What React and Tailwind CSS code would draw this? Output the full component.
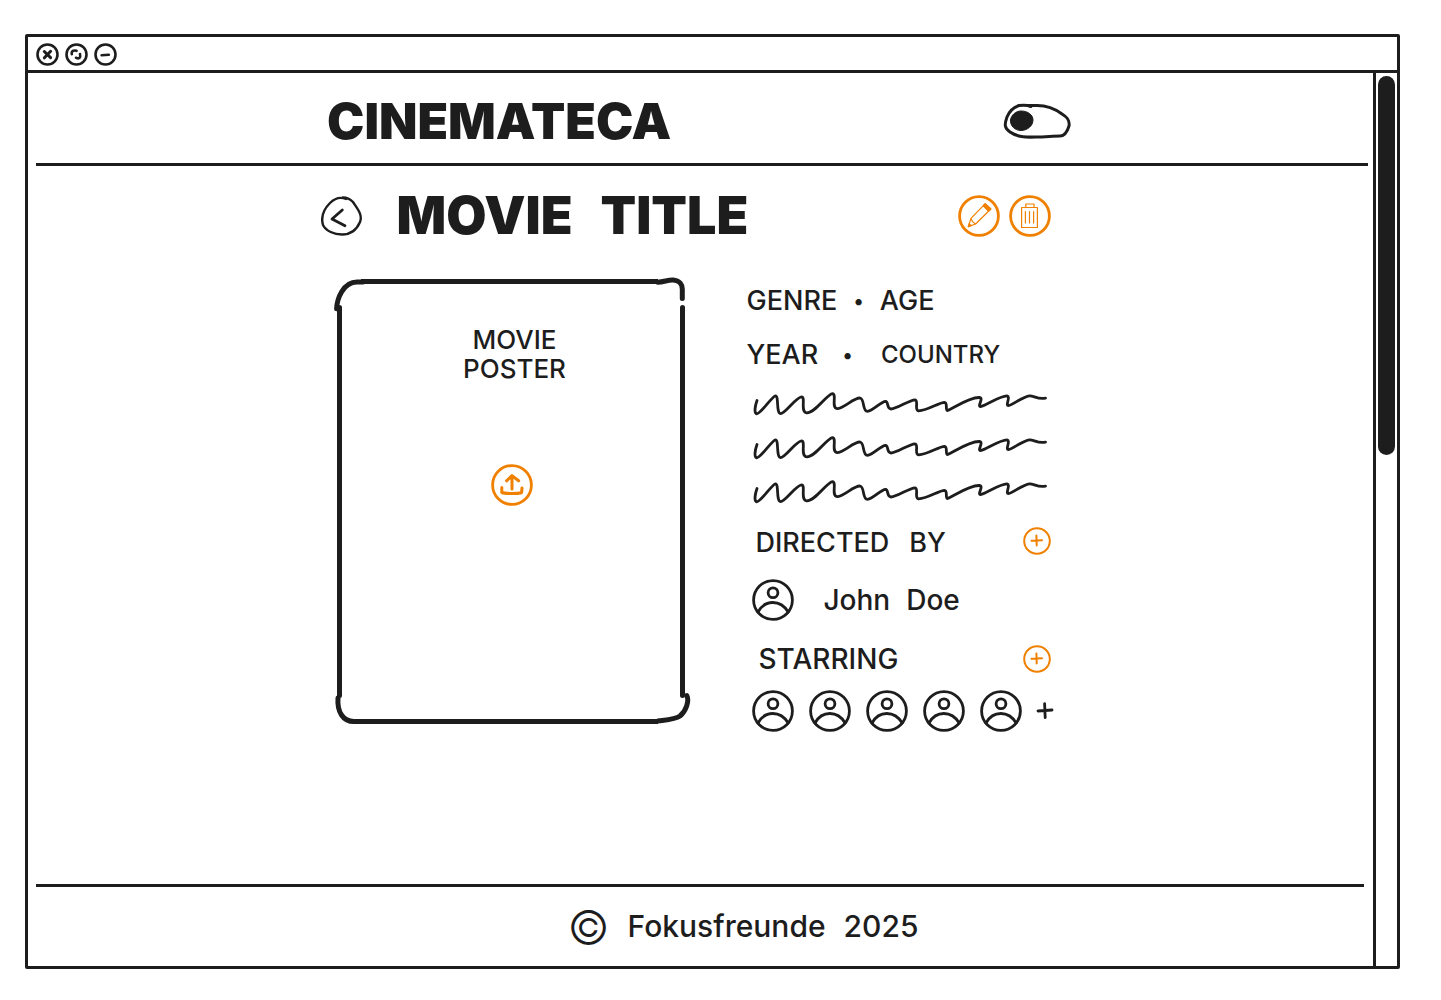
const stroke = {
  fill: 'none',
  stroke: 'currentColor',
  strokeLinecap: 'round',
  strokeLinejoin: 'round',
};

function WindowButton({ label, children }) {
  return (
    <button type="button" aria-label={label} className="size-[23px]">
      <svg viewBox="0 0 23 23" className="size-full" {...stroke} strokeWidth="2.6">
        <circle cx="11.5" cy="11.5" r="10" />
        {children}
      </svg>
    </button>
  );
}

function RoundButton({ label, children }) {
  return (
    <button type="button" aria-label={label} className="size-[42px] text-[#f08000]">
      <svg viewBox="0 0 42 42" className="size-full" {...stroke} strokeWidth="2.8">
        <circle cx="21" cy="21" r="19.4" />
        {children}
      </svg>
    </button>
  );
}

function AddButton({ label }) {
  return (
    <button type="button" aria-label={label} className="size-7 text-[#f08000]">
      <svg viewBox="0 0 28 28" className="size-full" {...stroke} strokeWidth="2">
        <circle cx="14" cy="14" r="12.8" />
        <path d="M8.5 13.7 L19 13.2 M13.4 8.6 L13.7 18.4" />
      </svg>
    </button>
  );
}

function Avatar() {
  return (
    <svg viewBox="0 0 42 42" className="size-[42px] shrink-0" aria-hidden="true" {...stroke} strokeWidth="2.8">
      <circle cx="21" cy="21" r="19.4" />
      <circle cx="21" cy="13.8" r="4.9" />
      <path d="M6 33 C13 20.3 28.5 20.3 36.2 33" />
    </svg>
  );
}

function Squiggle() {
  return (
    <svg viewBox="0 0 295 24" className="h-6 w-[295px]" aria-hidden="true" {...stroke} strokeWidth="2.8">
      <path d="M4 8.5 C2 14 1 21 3.6 21.8 C8 22 19 4 22.5 3.8 C26 4 23 21 27.5 21.6 C32 22 43 5 48.5 4.8 C53 5 47 20 53.5 20.8 C62 21.5 74 2 79.5 1.6 C84 2 78 16 84 16.6 C90 17 101 5.5 107 6 C112 7 109 19 114.5 19.4 C120 19 128 9.5 132.5 9.3 C136 9.6 133 16.5 138 17 C144 17 156 8 162 7.8 C166 8.4 161 18.3 165.5 18.8 C174 19 186 10.4 191.5 10.3 C195 10.6 192 18 194.5 18.6 C203 14.5 217 5 226.5 5.5 C231 6.3 224 14.5 227.5 14.6 C233 13.5 247 3.6 254 3.8 C258 4.6 252 13.5 255.5 13.6 C260 13 271 3.5 277.5 3.9 C283 4.6 284 7.4 292.5 6.2" />
    </svg>
  );
}

function PosterFrame() {
  return (
    <div aria-hidden="true" className="pointer-events-none absolute inset-0">
      <div className="absolute top-0 right-[29px] left-6 h-[5px] bg-[#1d1d1d]" />
      <div className="absolute right-[29px] bottom-0 left-5 h-[5px] bg-[#1d1d1d]" />
      <div className="absolute top-[26px] bottom-[26px] left-0 w-[5px] rounded-full bg-[#1d1d1d]" />
      <div className="absolute top-[26px] right-[2px] bottom-[26px] w-[5px] rounded-full bg-[#1d1d1d]" />
      <svg viewBox="0 0 32 34" className="absolute top-0 -left-1 h-[34px] w-8" {...stroke} strokeWidth="5">
        <path d="M3.6 29.8 C4 20 10 3 24 3 H30" />
      </svg>
      <svg viewBox="0 0 32 26" className="absolute -top-1 right-0 h-[26px] w-8" {...stroke} strokeWidth="5">
        <path d="M2.5 7.2 C9 7 13 4.8 18 5.1 C25 5.6 27.3 10 27.3 14 V23.5" />
      </svg>
      <svg viewBox="0 0 32 30" className="absolute bottom-0 -left-1 h-[30px] w-8" {...stroke} strokeWidth="5">
        <path d="M5 4 C4 18 10 27.5 21 27.5 H27" />
      </svg>
      <svg viewBox="0 0 36 32" className="absolute -right-1 bottom-0 h-8 w-9" {...stroke} strokeWidth="5">
        <path d="M3 29 C10 28 20 27.5 25 24 C31 19 34.5 9 31.8 3.5" />
      </svg>
    </div>
  );
}

export default function App() {
  return (
    <div className="flex min-h-screen flex-col bg-white pt-[34px] pr-[41px] pb-[31px] pl-[25px] font-[Inter,sans-serif] text-[#1d1d1d]">
      <div className="flex flex-1 flex-col rounded-xs border-[3px] border-[#1d1d1d]">
        <div className="flex h-9 items-center gap-[6px] border-b-[3px] border-[#1d1d1d] pt-px pl-2">
          <WindowButton label="Close">
            <path d="M8.3 8.5 L14.6 14.6 M14.6 8.3 L8.4 14.8" strokeWidth="3" />
          </WindowButton>
          <WindowButton label="Resize">
            <path d="M6.8 11.2 C6 8.5 8 6.8 11.5 7.8 M15 11 C15.8 15 14.5 16.2 11 14.8" />
          </WindowButton>
          <WindowButton label="Minimize">
            <path d="M7.6 12.2 L14.8 11.8" />
          </WindowButton>
        </div>

        <div className="flex flex-1">
          <div className="flex min-w-0 flex-1 flex-col">
            <header className="mr-[5px] ml-2 border-b-[3px] border-[#1d1d1d]">
              <div className="mx-auto flex h-[90px] max-w-[760px] items-center justify-between pt-[6px] pr-[11px] pl-[5px]">
                <a href="#" className="text-[50px] leading-none font-black">CINEMATECA</a>
                <label className="cursor-pointer">
                  <input type="checkbox" className="sr-only" aria-label="Dark mode" />
                  <svg viewBox="0 0 68 36" className="h-9 w-[68px]" aria-hidden="true" {...stroke} strokeWidth="3">
                    <path d="M28 3.5 C25 2.2 20 2 16 2.5 C10 4.5 6 9 4 14 C1.5 21 1 25 7 29 C14 34 22 34.5 33 34 C42 34 50 33 57 33 C62 33 64.5 28 66 23 C67 17 64 14 59 11 C51 5 43 2.5 34 2.5 H24" />
                    <path d="M7.5 17 C8 12 13 8 18 8 C25 8 30 12 30 17 C30 23 24 27.5 18 27.5 C12 27.5 7 23 7.5 17 Z" fill="currentColor" strokeWidth="1" />
                  </svg>
                </label>
              </div>
            </header>

            <main className="mx-auto w-full max-w-[760px] flex-1">
              <div className="flex h-[100px] items-center pr-[30px]">
                <button type="button" aria-label="Back" className="h-10 w-[42px]">
                  <svg viewBox="0 0 42 40" className="size-full" {...stroke} strokeWidth="2.4">
                    <path d="M25 3 C18 0 12 4 9 7 C2 14 0 22 2 29 C5 35 13 38.5 21 38.5 C30 38.5 36 33 39 26 C42 19 36 12 32 6 C29 3 26 1.5 22 1.5" />
                    <path d="M21.3 14 L11 23 L24 29.7" strokeWidth="2.8" />
                  </svg>
                </button>
                <h1 className="ml-[34px] flex flex-1 gap-7 text-[52px] leading-none font-black">
                  <span>MOVIE</span>
                  <span>TITLE</span>
                </h1>
                <div className="flex gap-[9px]">
                  <RoundButton label="Edit movie">
                    <g strokeWidth="1.2">
                      <path d="M10.3 31.6 L13 23.4 L27 8.8 L32.8 14 L17.6 29 Z M13 23.4 L14.5 26.6 L17.6 29 M25.2 10.8 L30.6 16.2" />
                      <path d="M25.5 10.5 L27.2 8.7 L32.8 14 L30.7 16.2 Z M10.3 31.6 L11.2 28.6 L13.2 30.6 Z" fill="currentColor" />
                    </g>
                  </RoundButton>
                  <RoundButton label="Delete movie">
                    <path d="M12.6 12.5 H28.4 V32.5 H12.6 Z M16.8 12 V9 H25 V12 M16.4 16.5 V28 M20.5 16.5 V28 M24.6 16.5 V28" strokeWidth="1.2" />
                  </RoundButton>
                </div>
              </div>

              <div className="mt-2 flex items-start">
                <section className="relative mt-[5px] ml-4 flex h-[445px] w-[350px] flex-col items-center">
                  <PosterFrame />
                  <p className="mt-[46px] pl-[6px] text-center text-[26px] leading-[29px] font-medium">
                    MOVIE
                    <br />
                    POSTER
                  </p>
                  <div className="mt-[81px]">
                    <RoundButton label="Upload poster">
                      <path d="M21 25 V11.8 M15.6 16.8 L21 11.6 L27.6 16.8 M10.8 23.5 V28.5 C14 29.8 26 29.8 30.6 28.7 L31 24" strokeWidth="3" />
                    </RoundButton>
                  </div>
                </section>

                <section className="ml-[60px] w-[308px]">
                  <div className="flex h-[54px] items-center gap-4 text-[27px] font-medium">
                    <span>GENRE</span>
                    <span className="text-xl">•</span>
                    <span>AGE</span>
                  </div>
                  <div className="flex h-[54px] items-center text-[27px] font-medium">
                    <span>YEAR</span>
                    <span className="ml-6 text-xl">•</span>
                    <span className="ml-7 text-2xl">COUNTRY</span>
                  </div>
                  <div className="flex h-[132px] flex-col justify-around pl-[6px]">
                    <Squiggle />
                    <Squiggle />
                    <Squiggle />
                  </div>
                  <div className="flex h-[54px] items-center justify-between pr-1 pl-[9px]">
                    <h2 className="flex gap-5 pt-1 text-[27px] font-medium">
                      <span>DIRECTED</span>
                      <span>BY</span>
                    </h2>
                    <AddButton label="Add director" />
                  </div>
                  <div className="flex h-16 items-center gap-[30px] pl-[5px] text-[28px] font-medium">
                    <Avatar />
                    <span className="flex gap-4">
                      <span>John</span>
                      <span>Doe</span>
                    </span>
                  </div>
                  <div className="flex h-[54px] items-center justify-between pr-1 pl-3">
                    <h2 className="text-[28px] font-medium">STARRING</h2>
                    <AddButton label="Add actor" />
                  </div>
                  <div className="flex h-[50px] items-center gap-[15px] pl-[5px]">
                    <Avatar />
                    <Avatar />
                    <Avatar />
                    <Avatar />
                    <Avatar />
                    <button type="button" aria-label="Show more actors" className="size-4">
                      <svg viewBox="0 0 16 16" className="size-full overflow-visible" {...stroke} strokeWidth="2.8">
                        <path d="M1 8 L15 7 M7.6 0.6 L8.2 14.6" />
                      </svg>
                    </button>
                  </div>
                </section>
              </div>
            </main>

            <footer className="mr-[9px] ml-2 flex h-[82px] items-center justify-center gap-[18px] border-t-[3px] border-[#1d1d1d] pl-[86px] text-[30px] font-medium">
              <span className="text-[46px] leading-none font-light">©</span>
              <span>Fokusfreunde</span>
              <span>2025</span>
            </footer>
          </div>

          <div className="w-[24px] border-l-[3px] border-[#1d1d1d] px-[2px] pt-[3px]">
            <div className="h-[379px] rounded-full bg-[#1d1d1d]" />
          </div>
        </div>
      </div>
    </div>
  );
}
